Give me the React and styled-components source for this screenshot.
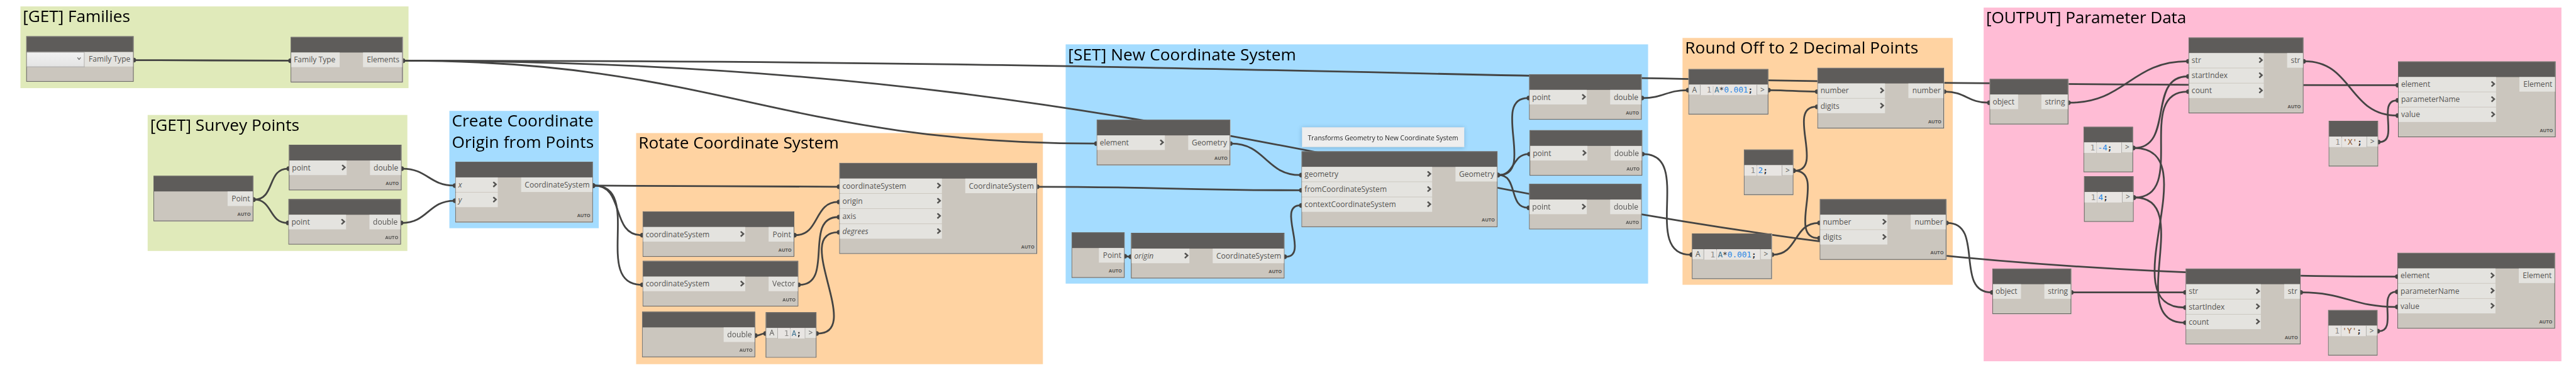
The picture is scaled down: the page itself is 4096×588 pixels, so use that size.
import React from "react";
import styled, { createGlobalStyle } from "styled-components";

const GlobalStyle = createGlobalStyle`
  html, body { margin: 0; padding: 0; background: #fff; overflow: hidden; }
`;

const HEADER = 27;
const PITCH = 26;

const Viewport = styled.main`
  width: 4096px;
  height: 588px;
  overflow: hidden;
  background: #fff;
`;

const Canvas = styled.div`
  position: relative;
  width: 4414px;
  height: 634px;
  transform: scale(0.92796, 0.92744);
  transform-origin: 0 0;
  font-family: "Open Sans", "Noto Sans", sans-serif;
  font-size: 13px;
  color: #555452;
`;

const Group = styled.section`
  position: absolute;
  left: ${(p) => p.$x}px;
  top: ${(p) => p.$y}px;
  width: ${(p) => p.$r - p.$x}px;
  height: ${(p) => p.$b - p.$y}px;
  background: ${(p) => p.$color};
`;

const GroupTitle = styled.h2`
  margin: -2.2px 0 0 4.2px;
  font-size: 28.3px;
  line-height: 36.3px;
  font-weight: 400;
  letter-spacing: ${(p) => p.$spacing || 0}px;
  color: #000;
  white-space: pre;
`;

const Wires = styled.svg`
  position: absolute;
  inset: 0;
  overflow: visible;
  path { fill: none; stroke: #444443; stroke-width: 3; }
  circle { fill: #444443; }
`;

const NodeCard = styled.article`
  position: absolute;
  left: ${(p) => p.$x}px;
  top: ${(p) => p.$y}px;
  width: ${(p) => p.$r - p.$x}px;
  box-sizing: border-box;
  display: flex;
  flex-direction: column;
  border: 1px solid #5e5c5a;
  background: #cbc6be;
`;

const Header = styled.header`
  height: ${HEADER - 1}px;
  background: #5e5c5a;
`;

const PortArea = styled.div`
  display: flex;
  justify-content: space-between;
  height: ${(p) => p.$rows * PITCH - 1}px;
`;

const PortColumn = styled.div`
  display: flex;
  flex-direction: column;
  gap: 1px;
  width: ${(p) => p.$w}px;
`;

const Port = styled.div`
  display: flex;
  align-items: center;
  justify-content: ${(p) => (p.$out ? "flex-end" : "space-between")};
  box-sizing: border-box;
  height: 25px;
  padding: ${(p) => (p.$out ? "0 4.6px 0 0" : "0 1px 0 4.4px")};
  background: #e4e3df;
  line-height: 25.4px;
  font-style: ${(p) => (p.$italic ? "italic" : "normal")};
  white-space: nowrap;
`;

const Footer = styled.footer`
  display: flex;
  justify-content: flex-end;
  height: 25px;
  padding-right: 3.5px;
  font-size: 8px;
  line-height: 27px;
  font-weight: 700;
`;

const Dropdown = styled.div`
  display: flex;
  align-items: center;
  justify-content: flex-end;
  box-sizing: border-box;
  width: 99px;
  height: 26px;
  padding: 0 5px 4px 0;
  border: 1px solid #acacac;
  border-left: none;
  background: linear-gradient(#f1f1f1, #e4e4e4);
`;

const CodeRow = styled.div`
  display: flex;
  align-items: flex-start;
  height: 25px;
`;

const CodePort = styled.div`
  width: ${(p) => p.$w}px;
  height: 17px;
  background: #e4e3df;
  text-align: center;
  line-height: 17.6px;
`;

const Editor = styled.div`
  display: flex;
  flex: 1;
  box-sizing: border-box;
  height: 18px;
  border-right: 1px solid #a9a7a4;
  border-left: ${(p) => (p.$divided ? "1px solid #a9a7a4" : "none")};
  background: #e8e5e2;
  font-family: "DejaVu Sans Mono", monospace;
  font-size: 13.7px;
  line-height: 18.4px;
  white-space: pre;
`;

const LineNumber = styled.span`
  box-sizing: border-box;
  width: 21.5px;
  padding-left: 10.5px;
  border-right: 1px dotted #a9a7a4;
  color: #8b8987;
`;

const CODE_COLORS = { id: "#417693", num: "#2585e5", str: "#8f5a33", op: "#333" };

const Token = styled.span`
  color: ${(p) => CODE_COLORS[p.$kind]};
  font-weight: ${(p) => (p.$bold ? 700 : 400)};
`;

const Code = styled.code`
  padding-left: 2px;
  font: inherit;
`;

const Tooltip = styled.div`
  position: absolute;
  left: 2231px;
  top: 217.5px;
  width: 278px;
  height: 34px;
  box-sizing: border-box;
  padding-left: 10px;
  border: solid #d5e0e8;
  border-width: 1px 0;
  background: #eeeeee;
  box-shadow: 0 1px 7px rgba(30, 80, 120, 0.3);
  color: #222;
  font-size: 11.25px;
  line-height: 33px;
  white-space: nowrap;
`;

const Chevron = () => (
  <svg width="8" height="11" viewBox="0 0 8 11">
    <path d="M1.2 0.7 5.9 4.9 1.2 9.2" fill="none" stroke="#555452" strokeWidth="2.7" />
  </svg>
);

const GREEN = "#e0eaba";
const BLUE = "#a4dcff";
const ORANGE = "#ffd3a2";
const PINK = "#ffbcd5";

const groups = [
  { x: 35, y: 11, r: 700, b: 151, color: GREEN, title: "[GET] Families", spacing: -0.1 },
  { x: 253, y: 197, r: 698, b: 430, color: GREEN, title: "[GET] Survey Points" },
  { x: 770, y: 190, r: 1026, b: 391, color: BLUE, title: "Create Coordinate\nOrigin from Points", spacing: 0.1 },
  { x: 1090, y: 228, r: 1787, b: 624, color: ORANGE, title: "Rotate Coordinate System" },
  { x: 1826, y: 76, r: 2824, b: 486, color: BLUE, title: "[SET] New Coordinate System", spacing: 0.07 },
  { x: 2883, y: 65, r: 3346, b: 488, color: ORANGE, title: "Round Off to 2 Decimal Points", spacing: 0.14 },
  { x: 3399, y: 13, r: 4389, b: 619, color: PINK, title: "[OUTPUT] Parameter Data", spacing: -0.15 },
];

// inR is the right edge of the input ports, outL the left edge of the output port.
const nodes = {
  types: { x: 45, y: 62, r: 229, dropdown: true, outL: 145, out: "Family Type", noAuto: true },
  elements: { x: 498, y: 63, r: 690, inR: 582, plain: true, ins: ["Family Type"], outL: 622, out: "Elements", noAuto: true },
  survey: { x: 263, y: 301, r: 434, outL: 390, out: "Point" },
  pointX: { x: 495, y: 248, r: 688, inR: 594, ins: ["point"], outL: 634, out: "double" },
  pointY: { x: 494, y: 341, r: 687, inR: 593, ins: ["point"], outL: 633, out: "double" },
  origin: { x: 780, y: 277, r: 1016, inR: 853, ins: ["/x", "/y"], outL: 893, out: "CoordinateSystem" },
  csOrigin: { x: 1101, y: 362, r: 1361, inR: 1277, ins: ["coordinateSystem"], outL: 1317, out: "Point" },
  csAxis: { x: 1101, y: 447, r: 1368, inR: 1277, ins: ["coordinateSystem"], outL: 1317, out: "Vector" },
  angle: { x: 1100, y: 534, r: 1294, outL: 1240, out: "double" },
  codeA: { x: 1312, y: 535, r: 1399, input: "A", code: [["id", "A"], ["op", ";"]] },
  rotate: { x: 1438, y: 279, r: 1777, inR: 1614, ins: ["coordinateSystem", "origin", "axis", "/degrees"], outL: 1654, out: "CoordinateSystem" },
  geometry: { x: 1879, y: 205, r: 2108, inR: 1996, ins: ["element"], outL: 2036, out: "Geometry" },
  base: { x: 1836, y: 398, r: 1927, outL: 1883, out: "Point" },
  baseCs: { x: 1938, y: 399, r: 2201, inR: 2038, ins: ["/origin"], outL: 2078, out: "CoordinateSystem" },
  transform: { x: 2230, y: 259, r: 2566, inR: 2454, ins: ["geometry", "fromCoordinateSystem", "contextCoordinateSystem"], outL: 2494, out: "Geometry" },
  getX: { x: 2620, y: 127, r: 2813, inR: 2719, ins: ["point"], outL: 2759, out: "double" },
  getY: { x: 2621, y: 223, r: 2814, inR: 2720, ins: ["point"], outL: 2760, out: "double" },
  getZ: { x: 2620, y: 315, r: 2813, inR: 2719, ins: ["point"], outL: 2759, out: "double" },
  scaleX: { x: 2893, y: 118, r: 3030, input: "A", code: [["id", "A"], ["op", "*"], ["num", "0.001"], ["op", ";"]] },
  scaleY: { x: 2899, y: 400, r: 3036, input: "A", code: [["id", "A"], ["op", "*"], ["num", "0.001"], ["op", ";"]] },
  two: { x: 2988, y: 256, r: 3073, code: [["num", "2"], ["op", ";"]] },
  roundX: { x: 3114, y: 116, r: 3331, inR: 3230, ins: ["number", "digits"], outL: 3270, out: "number" },
  roundY: { x: 3118, y: 341, r: 3335, inR: 3234, ins: ["number", "digits"], outL: 3274, out: "number" },
  stringX: { x: 3409, y: 135, r: 3544, inR: 3458, plain: true, ins: ["object"], outL: 3498, out: "string", noAuto: true },
  stringY: { x: 3414, y: 460, r: 3549, inR: 3463, plain: true, ins: ["object"], outL: 3503, out: "string", noAuto: true },
  minus4: { x: 3570, y: 217, r: 3655, code: [["num", "-4"], ["op", ";"]] },
  four: { x: 3571, y: 302, r: 3656, code: [["num", "4"], ["op", ";"]] },
  subX: { x: 3750, y: 64, r: 3947, inR: 3879, ins: ["str", "startIndex", "count"], outL: 3919, out: "str" },
  subY: { x: 3745, y: 460, r: 3942, inR: 3874, ins: ["str", "startIndex", "count"], outL: 3914, out: "str" },
  nameX: { x: 3990, y: 207, r: 4075, code: [["str", "'X'"], ["op", ";"]] },
  nameY: { x: 3989, y: 531, r: 4074, code: [["str", "'Y'"], ["op", ";"]] },
  setX: { x: 4109, y: 105, r: 4379, inR: 4277, ins: ["element", "parameterName", "value"], outL: 4317, out: "Element" },
  setY: { x: 4108, y: 433, r: 4378, inR: 4276, ins: ["element", "parameterName", "value"], outL: 4316, out: "Element" },
};

const wires = [
  ["types", "elements"], ["elements", "geometry"], ["elements", "setX"], ["elements", "setY"],
  ["survey", "pointX"], ["survey", "pointY"], ["pointX", "origin"], ["pointY", "origin", 1],
  ["origin", "rotate"], ["origin", "csOrigin"], ["origin", "csAxis"],
  ["csOrigin", "rotate", 1], ["csAxis", "rotate", 2], ["angle", "codeA"], ["codeA", "rotate", 3],
  ["rotate", "transform", 1], ["geometry", "transform"], ["base", "baseCs"], ["baseCs", "transform", 2],
  ["transform", "getX"], ["transform", "getY"], ["transform", "getZ"],
  ["getX", "scaleX"], ["getY", "scaleY"], ["scaleX", "roundX"], ["scaleY", "roundY"],
  ["two", "roundX", 1], ["two", "roundY", 1], ["roundX", "stringX"], ["roundY", "stringY"],
  ["stringX", "subX"], ["stringY", "subY"], ["minus4", "subX", 1], ["minus4", "subY", 1],
  ["four", "subX", 2], ["four", "subY", 2], ["subX", "setX", 2], ["subY", "setY", 2],
  ["nameX", "setX", 1], ["nameY", "setY", 1],
];

const portY = (node, row = 0) => node.y + (node.code ? 36.5 : 41) + row * PITCH;

function Wire({ from, to, row }) {
  const a = nodes[from];
  const b = nodes[to];
  const x1 = a.r + 2;
  const y1 = portY(a);
  const x2 = b.x - 2;
  const y2 = portY(b, b.code ? 0 : row);
  const pull = 0.45 * Math.hypot(x2 - x1, y2 - y1);
  return (
    <g>
      <path d={`M${x1} ${y1}C${x1 + pull} ${y1} ${x2 - pull} ${y2} ${x2} ${y2}`} />
      <circle cx={a.r + 0.2} cy={y1} r="4" />
      <circle cx={b.x - 0.2} cy={y2} r="4" />
    </g>
  );
}

function CodeNode({ node }) {
  return (
    <NodeCard $x={node.x} $y={node.y} $r={node.r}>
      <Header />
      <CodeRow>
        {node.input && <CodePort $w={19}>{node.input}</CodePort>}
        <Editor $divided={!!node.input}>
          <LineNumber>1</LineNumber>
          <Code>
            {node.code.map(([kind, text], i) => (
              <Token key={i} $kind={kind} $bold={text === ";"}>{text}</Token>
            ))}
          </Code>
        </Editor>
        <CodePort $w={18}>&gt;</CodePort>
      </CodeRow>
      <Footer />
    </NodeCard>
  );
}

function Node({ node }) {
  const ins = node.ins || [];
  return (
    <NodeCard $x={node.x} $y={node.y} $r={node.r}>
      <Header />
      <PortArea $rows={Math.max(1, ins.length)}>
        {node.dropdown ? (
          <Dropdown>
            <svg width="7" height="5" viewBox="0 0 7 5">
              <path d="M0.8 0.6 3.5 4 6.2 0.6" fill="none" stroke="#606060" strokeWidth="1.3" />
            </svg>
          </Dropdown>
        ) : (
          <PortColumn $w={ins.length ? node.inR - node.x - 1 : 0}>
            {ins.map((name) => (
              <Port key={name} $italic={name[0] === "/"}>
                {name.replace("/", "")}
                {!node.plain && <Chevron />}
              </Port>
            ))}
          </PortColumn>
        )}
        <PortColumn $w={node.r - 1 - node.outL}>
          <Port $out>{node.out}</Port>
        </PortColumn>
      </PortArea>
      <Footer>{node.noAuto ? null : "AUTO"}</Footer>
    </NodeCard>
  );
}

export default function App() {
  return (
    <Viewport>
      <GlobalStyle />
      <Canvas>
        {groups.map((g) => (
          <Group key={g.title} $x={g.x} $y={g.y} $r={g.r} $b={g.b} $color={g.color}>
            <GroupTitle $spacing={g.spacing}>{g.title}</GroupTitle>
          </Group>
        ))}
        <Wires width="4414" height="634" viewBox="0 0 4414 634">
          {wires.map(([from, to, row]) => (
            <Wire key={`${from}-${to}`} from={from} to={to} row={row} />
          ))}
        </Wires>
        {Object.entries(nodes).map(([id, node]) =>
          node.code ? <CodeNode key={id} node={node} /> : <Node key={id} node={node} />
        )}
        <Tooltip>Transforms Geometry to New Coordinate System</Tooltip>
      </Canvas>
    </Viewport>
  );
}
